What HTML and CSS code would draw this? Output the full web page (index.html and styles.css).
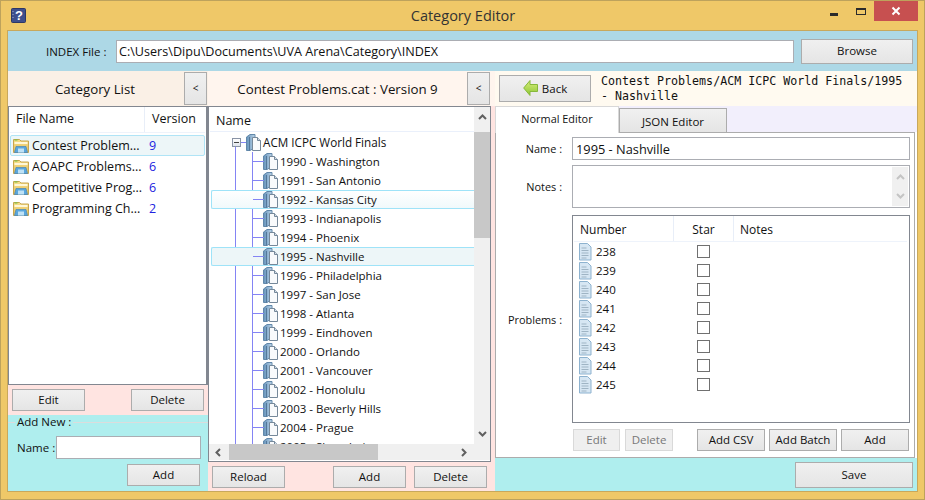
FILE: index.html
```html
<!DOCTYPE html>
<html>
<head>
    <meta charset="UTF-8">
    <title>Category Editor</title>
    <link rel="stylesheet" href="styles.css">
</head>
<body>
<svg class="defs" width="0" height="0">
    <defs>
        <linearGradient id="folderBack" x1="0" y1="0" x2="0" y2="1">
            <stop offset="0" stop-color="#f8e08a"/>
            <stop offset="1" stop-color="#e2bc5c"/>
        </linearGradient>
        <linearGradient id="bookLeaf" x1="0" y1="0" x2="1" y2="0">
            <stop offset="0" stop-color="#6492ba"/>
            <stop offset="1" stop-color="#bcd4e8"/>
        </linearGradient>
        <linearGradient id="arrowFill" x1="0" y1="0" x2="0" y2="1">
            <stop offset="0" stop-color="#d8ee7c"/>
            <stop offset="1" stop-color="#8cc634"/>
        </linearGradient>
        <symbol id="folder" viewBox="0 0 16 16">
            <path d="M0.5 1.500h6l1.500 1.500h7.500v11.500h-15z" fill="url(#folderBack)" stroke="#c9a64e"/>
            <rect x="1.500" y="4" width="13" height="2" fill="#fff7d8"/>
            <rect x="1.500" y="1.500" width="3" height="1" fill="#6cc24a"/>
            <path d="M1.500 14.500l1.500-6h10l1.500 6z" fill="#5aa6dc" stroke="#3c80b8" stroke-width="0.6"/>
            <rect x="5" y="10.500" width="6" height="4" fill="#bfe2f6"/>
        </symbol>
        <symbol id="book" viewBox="0 0 15 17">
            <path d="M0.500 3l3.500-2.500h5v13l-5 3h-3.500z" fill="url(#bookLeaf)" stroke="#6288aa"/>
            <path d="M3.500 3v13.500" stroke="#54789a"/>
            <path d="M6.500 3.500h5l3 3v10h-8z" fill="#f8fafc" stroke="#75889a"/>
            <path d="M11.500 3.500v3h3" fill="#d4dee8" stroke="#75889a"/>
        </symbol>
        <symbol id="doc" viewBox="0 0 16 18">
            <path d="M2.500 0.500h8l3.500 3.500v13h-11.500z" fill="#d6e6f3" stroke="#8db2cf"/>
            <path d="M4.500 5h5M4.500 7.500h7M4.500 10h7M4.500 12.500h7M4.500 15h5" stroke="#9fb4c4"/>
        </symbol>
    </defs>
</svg>

<div class="window">
    <div class="titlebar">
        <svg class="app-icon" width="15" height="15" viewBox="0 0 15 15">
            <rect x="0.500" y="0.500" width="14" height="14" rx="1" fill="#3f4f8c" stroke="#2c3766"/>
            <path d="M2 3v9" stroke="#a8b0d0" stroke-dasharray="1 2"/>
            <text x="8" y="12" text-anchor="middle" class="app-icon-mark">?</text>
        </svg>
        <div class="title">Category Editor</div>
        <div class="caption">
            <span class="cap-min"></span>
            <span class="cap-max"></span>
            <span class="cap-close">
                <svg width="10" height="10" viewBox="0 0 10 10"><path d="M1.500 1.500l7 7M8.500 1.500l-7 7" stroke="#fff" stroke-width="2"/></svg>
            </span>
        </div>
    </div>

    <div class="client">
        <div class="index-bar">
            <label class="index-label">INDEX File :</label>
            <div class="field index-field">C:\Users\Dipu\Documents\UVA Arena\Category\INDEX</div>
            <button class="btn browse-btn">Browse</button>
        </div>

        <div class="columns">
            <div class="col-left">
                <div class="head head-left">
                    <div class="head-title">Category List</div>
                    <button class="btn collapse-btn">&lt;</button>
                </div>
                <div class="listview file-list">
                    <div class="file-head">
                        <div class="file-name-col">File Name</div>
                        <div class="file-ver-col">Version</div>
                    </div>
                    <div class="file-row selected">
                        <svg class="ico-folder"><use href="#folder"/></svg>
                        <span class="file-name">Contest Problem...</span><span class="file-ver">9</span>
                    </div>
                    <div class="file-row">
                        <svg class="ico-folder"><use href="#folder"/></svg>
                        <span class="file-name">AOAPC Problems...</span><span class="file-ver">6</span>
                    </div>
                    <div class="file-row">
                        <svg class="ico-folder"><use href="#folder"/></svg>
                        <span class="file-name">Competitive Prog...</span><span class="file-ver">6</span>
                    </div>
                    <div class="file-row">
                        <svg class="ico-folder"><use href="#folder"/></svg>
                        <span class="file-name">Programming Ch...</span><span class="file-ver">2</span>
                    </div>
                </div>
                <div class="btn-row left-actions">
                    <button class="btn btn-md">Edit</button>
                    <button class="btn btn-md">Delete</button>
                </div>
                <fieldset class="add-new">
                    <legend>Add New :</legend>
                    <div class="add-name">
                        <label>Name :</label>
                        <div class="field add-field"></div>
                    </div>
                    <div class="add-foot">
                        <button class="btn btn-md">Add</button>
                    </div>
                </fieldset>
            </div>

            <div class="col-mid">
                <div class="head head-mid">
                    <div class="head-title">Contest Problems.cat : Version 9</div>
                    <button class="btn collapse-btn">&lt;</button>
                </div>
                <div class="listview tree-box">
                    <div class="tree-top">
                        <div class="tree-main">
                            <div class="tree-head">Name</div>
                            <div class="tree">
                                <div class="tree-root">
                                    <span class="minus-box"></span>
                                    <svg class="ico-book"><use href="#book"/></svg>
                                    <span class="root-name">ACM ICPC World Finals</span>
                                </div>
                                <div class="tree-row"><svg class="ico-book"><use href="#book"/></svg><span>1990 - Washington</span></div>
                                <div class="tree-row"><svg class="ico-book"><use href="#book"/></svg><span>1991 - San Antonio</span></div>
                                <div class="tree-row hot"><svg class="ico-book"><use href="#book"/></svg><span>1992 - Kansas City</span></div>
                                <div class="tree-row"><svg class="ico-book"><use href="#book"/></svg><span>1993 - Indianapolis</span></div>
                                <div class="tree-row"><svg class="ico-book"><use href="#book"/></svg><span>1994 - Phoenix</span></div>
                                <div class="tree-row current"><svg class="ico-book"><use href="#book"/></svg><span>1995 - Nashville</span></div>
                                <div class="tree-row"><svg class="ico-book"><use href="#book"/></svg><span>1996 - Philadelphia</span></div>
                                <div class="tree-row"><svg class="ico-book"><use href="#book"/></svg><span>1997 - San Jose</span></div>
                                <div class="tree-row"><svg class="ico-book"><use href="#book"/></svg><span>1998 - Atlanta</span></div>
                                <div class="tree-row"><svg class="ico-book"><use href="#book"/></svg><span>1999 - Eindhoven</span></div>
                                <div class="tree-row"><svg class="ico-book"><use href="#book"/></svg><span>2000 - Orlando</span></div>
                                <div class="tree-row"><svg class="ico-book"><use href="#book"/></svg><span>2001 - Vancouver</span></div>
                                <div class="tree-row"><svg class="ico-book"><use href="#book"/></svg><span>2002 - Honolulu</span></div>
                                <div class="tree-row"><svg class="ico-book"><use href="#book"/></svg><span>2003 - Beverly Hills</span></div>
                                <div class="tree-row"><svg class="ico-book"><use href="#book"/></svg><span>2004 - Prague</span></div>
                                <div class="tree-row"><svg class="ico-book"><use href="#book"/></svg><span>2005 - Shanghai</span></div>
                            </div>
                        </div>
                        <div class="vscroll">
                            <svg class="arrow" width="9" height="6" viewBox="0 0 9 6"><path d="M1 5l3.500-3.500L8 5" fill="none" stroke="#606060" stroke-width="2"/></svg>
                            <div class="vthumb-wrap"><div class="vthumb"></div></div>
                            <svg class="arrow" width="9" height="6" viewBox="0 0 9 6"><path d="M1 1l3.500 3.500L8 1" fill="none" stroke="#606060" stroke-width="2"/></svg>
                        </div>
                    </div>
                    <div class="hscroll">
                        <svg class="arrow" width="6" height="9" viewBox="0 0 6 9"><path d="M5 1L1.500 4.500 5 8" fill="none" stroke="#606060" stroke-width="2"/></svg>
                        <div class="hthumb-wrap"><div class="hthumb"></div></div>
                        <svg class="arrow" width="6" height="9" viewBox="0 0 6 9"><path d="M1 1l3.500 3.500L1 8" fill="none" stroke="#606060" stroke-width="2"/></svg>
                    </div>
                </div>
                <div class="btn-row mid-actions">
                    <button class="btn btn-md">Reload</button>
                    <div class="mid-right">
                        <button class="btn btn-md">Add</button>
                        <button class="btn btn-md">Delete</button>
                    </div>
                </div>
            </div>

            <div class="col-right">
                <div class="head head-right">
                    <button class="btn back-btn">
                        <svg width="15" height="16" viewBox="0 0 15 16"><path d="M7 0.500L0.700 8 7 15.500v-4h7.500v-7H7z" fill="url(#arrowFill)" stroke="#86b83a"/></svg>
                        <span>Back</span>
                    </button>
                    <div class="crumb">Contest Problems/ACM ICPC World Finals/1995 - Nashville</div>
                </div>
                <div class="tabs">
                    <div class="tab tab-on">Normal Editor</div>
                    <div class="tab tab-off">JSON Editor</div>
                </div>
                <div class="tab-body">
                    <div class="form-row name-row">
                        <label class="form-label">Name :</label>
                        <div class="field name-field">1995 - Nashville</div>
                    </div>
                    <div class="form-row notes-row">
                        <label class="form-label">Notes :</label>
                        <div class="field notes-field">
                            <div class="notes-scroll">
                                <svg width="9" height="6" viewBox="0 0 9 6"><path d="M1 5l3.500-3.500L8 5" fill="none" stroke="#c4c4c4" stroke-width="2"/></svg>
                                <svg width="9" height="6" viewBox="0 0 9 6"><path d="M1 1l3.500 3.500L8 1" fill="none" stroke="#c4c4c4" stroke-width="2"/></svg>
                            </div>
                        </div>
                    </div>
                    <div class="form-row problems-row">
                        <label class="form-label">Problems :</label>
                        <div class="listview problems">
                            <div class="prob-head">
                                <div class="prob-num-col">Number</div>
                                <div class="prob-star-col">Star</div>
                                <div class="prob-notes-col">Notes</div>
                            </div>
                            <div class="prob-row"><svg class="ico-doc"><use href="#doc"/></svg><span class="prob-num">238</span><span class="check"></span></div>
                            <div class="prob-row"><svg class="ico-doc"><use href="#doc"/></svg><span class="prob-num">239</span><span class="check"></span></div>
                            <div class="prob-row"><svg class="ico-doc"><use href="#doc"/></svg><span class="prob-num">240</span><span class="check"></span></div>
                            <div class="prob-row"><svg class="ico-doc"><use href="#doc"/></svg><span class="prob-num">241</span><span class="check"></span></div>
                            <div class="prob-row"><svg class="ico-doc"><use href="#doc"/></svg><span class="prob-num">242</span><span class="check"></span></div>
                            <div class="prob-row"><svg class="ico-doc"><use href="#doc"/></svg><span class="prob-num">243</span><span class="check"></span></div>
                            <div class="prob-row"><svg class="ico-doc"><use href="#doc"/></svg><span class="prob-num">244</span><span class="check"></span></div>
                            <div class="prob-row"><svg class="ico-doc"><use href="#doc"/></svg><span class="prob-num">245</span><span class="check"></span></div>
                        </div>
                    </div>
                    <div class="prob-actions">
                        <button class="btn btn-off btn-edit">Edit</button>
                        <button class="btn btn-off btn-del">Delete</button>
                        <button class="btn btn-wide btn-csv">Add CSV</button>
                        <button class="btn btn-wide">Add Batch</button>
                        <button class="btn btn-wide">Add</button>
                    </div>
                </div>
                <div class="save-bar">
                    <button class="btn save-btn">Save</button>
                </div>
            </div>
        </div>
    </div>
</div>
</body>
</html>
```

FILE: styles.css
```css
* {
    box-sizing: border-box;
}

body {
    margin: 0;
    font-family: "Open Sans", "Noto Sans", sans-serif;
    font-size: 11.5px;
    color: #111;
}

.defs {
    display: block;
    height: 0;
}

.window {
    width: 925px;
    height: 500px;
    background-color: #efc868;
    border: 1px solid #bda25c;
    display: flex;
    flex-direction: column;
    padding: 0 6px 7px 7px;
    overflow: hidden;
}

/* title bar */
.titlebar {
    height: 29px;
    flex: none;
    display: flex;
    align-items: flex-start;
    position: relative;
}

.app-icon {
    margin: 7px 0 0 3px;
}

.app-icon-mark {
    font-family: "Liberation Sans", sans-serif;
    font-weight: bold;
    font-size: 13px;
    fill: #fff;
}

.title {
    flex: 1;
    text-align: center;
    font-size: 14.5px;
    line-height: 29px;
    color: #333;
    padding-right: 18px;
}

.caption {
    position: absolute;
    right: 0;
    top: 0;
    display: flex;
    height: 20px;
}

.cap-min {
    width: 8px;
    height: 3px;
    background-color: #2b2b2b;
    margin: 12px 18px 0 0;
}

.cap-max {
    width: 10px;
    height: 7px;
    border: 1px solid #2b2b2b;
    border-top-width: 2px;
    margin: 7px 8px 0 0;
}

.cap-close {
    width: 44px;
    height: 20px;
    background-color: #c75050;
    display: flex;
    align-items: center;
    justify-content: center;
}

/* main area */
.client {
    flex: 1;
    display: flex;
    flex-direction: column;
    border: 1px solid #c8a85c;
    min-height: 0;
    margin-left: -1px;
}

.index-bar {
    height: 40px;
    flex: none;
    background-color: #add8e6;
    display: flex;
    align-items: center;
    padding: 0 4px 0 38px;
}

.index-label {
    width: 70px;
}

.field {
    background-color: #fff;
    border: 1px solid #abadb3;
}

.index-field {
    width: 678px;
    height: 23px;
    margin-right: 7px;
    padding: 3px 2px;
    font-size: 12.6px;
    line-height: 15px;
}

.btn {
    font-family: inherit;
    font-size: 11.5px;
    color: #111;
    padding: 0 0 1px;
    border: 1px solid #acacac;
    background: linear-gradient(#f0f0f0, #e5e5e5);
}

.browse-btn {
    width: 112px;
    height: 25px;
}

.columns {
    flex: 1;
    display: flex;
    min-height: 0;
}

.col-left,
.col-mid,
.col-right {
    display: flex;
    flex-direction: column;
    min-height: 0;
}

.col-left {
    width: 200px;
    flex: none;
    background-color: #afeeee;
}

.col-mid {
    width: 287px;
    flex: none;
    background-color: #ffe4e1;
}

.col-right {
    flex: 1;
    min-width: 0;
    background-color: #fff;
}

.head {
    height: 35px;
    flex: none;
    display: flex;
    align-items: center;
}

.head-left {
    background-color: #faf0e6;
    padding-right: 1px;
}

.head-mid {
    background-color: #fff5ee;
    padding-right: 5px;
}

.head-right {
    background-color: #fffaf0;
    padding-left: 4px;
}

.head-title {
    flex: 1;
    text-align: center;
    font-size: 13.3px;
}

.head-left .head-title {
    padding-right: 2px;
}

.collapse-btn {
    width: 23px;
    height: 33px;
    font-size: 10px;
}

.listview {
    background-color: #fff;
    border: 1px solid #828790;
}

/* file list */
.file-list {
    height: 279px;
    flex: none;
    padding: 0 1px;
    border-width: 1px 2px 1px 1px;
}

.file-head {
    height: 26px;
    display: flex;
    font-size: 12.5px;
    line-height: 24px;
    margin-bottom: 2px;
    border-bottom: 1px solid #eef3fb;
}

.file-name-col {
    width: 135px;
    padding-left: 6px;
    border-right: 1px solid #e8eef8;
}

.file-ver-col {
    padding-left: 7px;
}

.file-row {
    height: 21px;
    display: flex;
    align-items: center;
    padding-left: 2px;
    font-size: 12.5px;
    border: 1px solid transparent;
    border-radius: 2px;
    width: 195px;
}

.file-row.selected {
    background-color: #edf6f8;
    border-color: #b0e4f6;
}

.ico-folder {
    width: 16px;
    height: 16px;
    flex: none;
}

.file-name {
    width: 117px;
    margin-left: 3px;
    white-space: nowrap;
    overflow: hidden;
}

.file-ver {
    color: #2222e0;
}

/* buttons under lists */
.btn-row {
    flex: none;
    display: flex;
    justify-content: space-between;
}

.btn-md {
    width: 73px;
    height: 22px;
}

.left-actions {
    height: 30px;
    background-color: #ffe4e1;
    padding: 4px 4px;
}

.add-new {
    flex: 1;
    margin: 0;
    padding: 0 7px;
    border: 0;
    border-top: 1px solid #dcdcdc;
    min-width: 0;
}

.add-new legend {
    padding: 0 2px;
    font-size: 11.5px;
    line-height: 14px;
}

.add-name {
    display: flex;
    align-items: center;
    margin-top: 7px;
    padding-left: 2px;
}

.add-name label {
    width: 39px;
}

.add-field {
    width: 145px;
    height: 23px;
}

.add-foot {
    display: flex;
    justify-content: flex-end;
    margin-top: 5px;
    padding-right: 1px;
}

/* tree */
.tree-box {
    width: 283px;
    height: 356px;
    flex: none;
    display: flex;
    flex-direction: column;
    padding: 0 0 1px;
}

.tree-top {
    flex: 1;
    display: flex;
    min-height: 0;
}

.tree-main {
    flex: 1;
    min-width: 0;
    display: flex;
    flex-direction: column;
    padding-left: 1px;
}

.tree-head {
    height: 25px;
    flex: none;
    padding: 1px 0 0 6px;
    line-height: 25px;
    font-size: 12.5px;
    border-bottom: 1px solid #eaf0fb;
}

.tree {
    flex: 1;
    overflow: hidden;
    position: relative;
    padding-top: 1px;
    font-size: 11.5px;
}

/* the two guide lines of the tree */
.tree::before,
.tree::after {
    content: "";
    position: absolute;
    width: 1px;
    bottom: 0;
    background-color: #8484f4;
}

.tree::before {
    left: 25px;
    top: 15px;
}

.tree::after {
    left: 42px;
    top: 20px;
}

.tree-root {
    height: 19px;
    display: flex;
    align-items: center;
    margin-left: 22px;
    position: relative;
    z-index: 1;
    font-size: 11.7px;
}

.root-name {
    margin-bottom: 2px;
}

.minus-box {
    width: 9px;
    height: 9px;
    border: 1px solid #8a94a6;
    background: linear-gradient(#fff, #dfe4ec);
    position: relative;
}

.minus-box::after {
    content: "";
    position: absolute;
    left: 1px;
    top: 3px;
    width: 5px;
    height: 1px;
    background-color: #444;
}

/* stub from the minus box to the root icon */
.minus-box::before {
    content: "";
    position: absolute;
    left: 8px;
    top: 3px;
    width: 5px;
    height: 1px;
    background-color: #8484f4;
}

.ico-book {
    width: 15px;
    height: 17px;
    flex: none;
    margin-right: 2px;
}

.tree-root .ico-book {
    margin: 0 2px 0 5px;
}

.tree-row {
    height: 19px;
    display: flex;
    align-items: center;
    padding-left: 51px;
    position: relative;
    border: 1px solid transparent;
    border-right: 0;
    border-radius: 2px 0 0 2px;
    z-index: 1;
    margin-left: 1px;
}

.tree-row::before {
    content: "";
    position: absolute;
    left: 41px;
    top: 8px;
    width: 11px;
    height: 1px;
    background-color: #8484f4;
}

.tree-row.hot {
    background: linear-gradient(#ffffff, #f0f9fb);
    border-color: #9fe3f8;
}

.tree-row.current {
    background-color: #edf6f8;
    border-color: #9fe3f8;
}

.vscroll {
    width: 16px;
    background-color: #f0f0f0;
    display: flex;
    flex-direction: column;
    align-items: center;
    padding: 7px 0 7px;
}

.vthumb-wrap {
    flex: 1;
    width: 100%;
    margin-top: 12px;
}

.vthumb {
    height: 106px;
    background-color: #c8c8c8;
}

.hscroll {
    height: 16px;
    flex: none;
    background-color: #f0f0f0;
    display: flex;
    align-items: center;
    padding: 0 23px 0 6px;
}

.hthumb-wrap {
    flex: 1;
    height: 100%;
    padding-left: 8px;
}

.hthumb {
    width: 149px;
    height: 100%;
    background-color: #c8c8c8;
}

.mid-actions {
    height: 30px;
    padding: 4px 8px 4px 4px;
}

.mid-right {
    display: flex;
    gap: 8px;
}

/* right column */
.back-btn {
    width: 92px;
    height: 27px;
    display: flex;
    align-items: center;
    justify-content: center;
    gap: 4px;
}

.crumb {
    width: 312px;
    margin: 3px 0 0 10px;
    align-self: flex-start;
    font-family: "DejaVu Sans Mono", monospace;
    font-size: 11.65px;
    line-height: 15px;
}

.tabs {
    height: 26px;
    flex: none;
    display: flex;
    align-items: flex-end;
    background-color: #f2effc;
    position: relative;
}

.tab {
    text-align: center;
}

.tab-on {
    width: 124px;
    height: 27px;
    background-color: #fff;
    border: 1px solid #d8d8d8;
    border-bottom: 0;
    font-size: 10.9px;
    line-height: 24px;
    position: relative;
    z-index: 1;
    margin-bottom: -1px;
}

.tab-off {
    width: 108px;
    height: 24px;
    line-height: 25px;
    border: 1px solid #acacac;
    border-bottom: 0;
    background: linear-gradient(#f0f0f0, #e5e5e5);
}

.tab-body {
    height: 326px;
    flex: none;
    margin-right: 2px;
    border: 1px solid #acacac;
    padding: 4px 4px 0 76px;
    display: flex;
    flex-direction: column;
}

.form-row {
    display: flex;
    align-items: center;
    position: relative;
}

.form-label {
    position: absolute;
    right: 100%;
    margin-right: 10px;
    white-space: nowrap;
    font-size: 10.9px;
}

.name-field {
    width: 338px;
    height: 23px;
    font-size: 12.8px;
    line-height: 22px;
    padding-left: 3px;
}

.notes-row {
    margin-top: 5px;
}

.notes-field {
    width: 338px;
    height: 43px;
    display: flex;
    justify-content: flex-end;
    padding: 1px;
}

.notes-scroll {
    width: 16px;
    background-color: #f0f0f0;
    display: flex;
    flex-direction: column;
    align-items: center;
    justify-content: space-between;
    padding: 7px 0;
}

.problems-row {
    margin-top: 7px;
}

.problems {
    width: 338px;
    height: 208px;
    padding: 0 1px;
}

.prob-head {
    height: 26px;
    display: flex;
    font-size: 12px;
    line-height: 27px;
    border-bottom: 1px solid #eef3fb;
    margin-right: 1px;
}

.prob-num-col {
    width: 100px;
    padding-left: 6px;
    border-right: 1px solid #e8eef8;
}

.prob-star-col {
    width: 60px;
    text-align: center;
    border-right: 1px solid #e8eef8;
}

.prob-notes-col {
    padding-left: 6px;
}

.prob-row {
    height: 19px;
    display: flex;
    align-items: center;
    padding-left: 3px;
    font-size: 11.5px;
}

.ico-doc {
    width: 16px;
    height: 18px;
    flex: none;
}

.prob-num {
    width: 101px;
    margin-left: 3px;
}

.check {
    width: 13px;
    height: 13px;
    border: 1px solid #707070;
    background-color: #fff;
}

.prob-actions {
    display: flex;
    margin-top: 6px;
    margin-left: 1px;
}

.prob-actions .btn {
    height: 22px;
    flex: none;
}

.btn-off {
    color: #777;
    border-color: #d9d9d9;
    background: #efefef;
}

.btn-edit {
    width: 47px;
    margin-right: 5px;
}

.btn-del {
    width: 48px;
    margin-right: 24px;
}

.btn-wide {
    width: 68px;
    margin-right: 4px;
}

.btn-wide:last-child {
    margin-right: 0;
}

.save-bar {
    flex: 1;
    background-color: #afeeee;
    display: flex;
    justify-content: flex-end;
    align-items: center;
    padding-right: 4px;
}

.save-btn {
    width: 118px;
    height: 26px;
}
```
